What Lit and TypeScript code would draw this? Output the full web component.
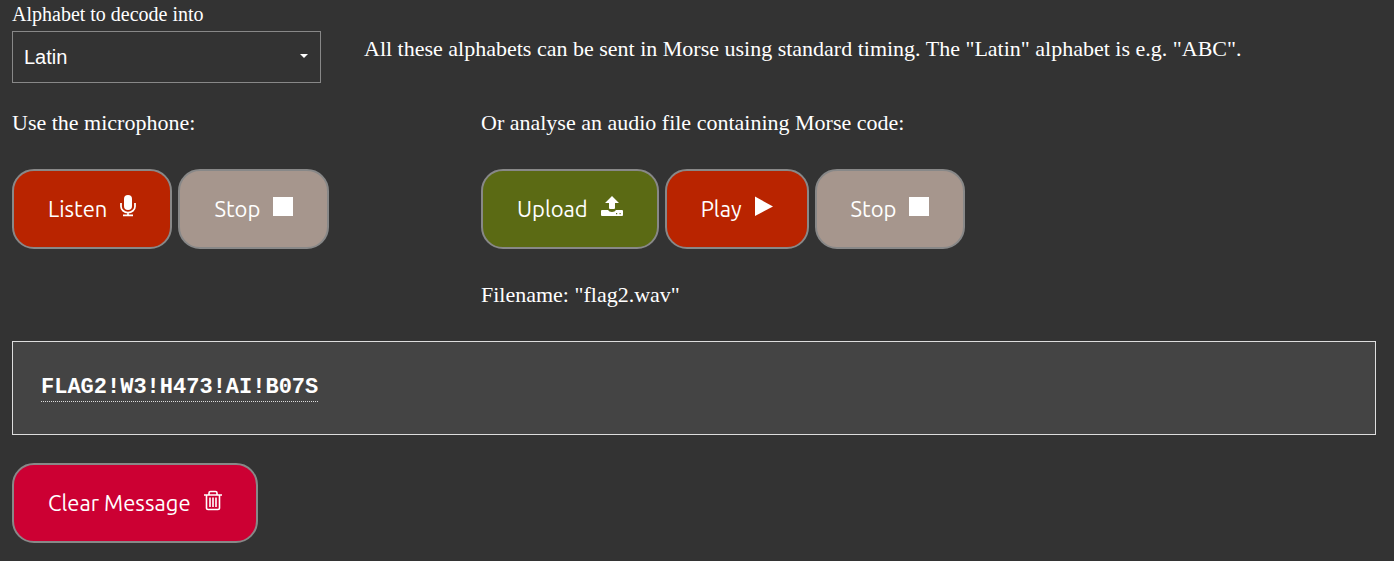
import { LitElement, html, css, svg } from "lit";
import { customElement, property, state } from "lit/decorators.js";

const icons = {
  mic: svg`<svg viewBox="0 0 16 22" width="16" height="22" aria-hidden="true">
    <rect x="4" y="0" width="8" height="15" rx="4" fill="currentColor" />
    <path d="M1 8v3.500a7 6 0 0 0 14 0V8M8 17.500V21M3 20.250h10" fill="none" stroke="currentColor" stroke-width="1.750" />
  </svg>`,
  stop: svg`<svg viewBox="0 0 20 22" width="20" height="22" aria-hidden="true">
    <rect x="0" y="2" width="20" height="19" fill="currentColor" />
  </svg>`,
  play: svg`<svg viewBox="0 0 18 22" width="18" height="22" aria-hidden="true">
    <path d="M0 1.500l18 10L0 21z" fill="currentColor" />
  </svg>`,
  upload: svg`<svg viewBox="0 0 22 22" width="22" height="22" aria-hidden="true">
    <path fill="currentColor" fill-rule="evenodd" d="M11 1l7 7h-4v5q0 1-1 1H9q-1 0-1-1V8H4zM1 15h6q1 2 4 2t4-2h6q1 0 1 1v4q0 1-1 1H1q-1 0-1-1v-4q0-1 1-1zM15 18v1.200h1.200V18zM18.500 18v1.200h1.200V18z" />
  </svg>`,
  trash: svg`<svg viewBox="0 0 18 22" width="18" height="22" aria-hidden="true">
    <path d="M0 6h18M5 5.500V4q0-1.500 1.500-1.500h5Q13 2.500 13 4v1.500M2.500 6v13q0 1.500 1.500 1.500h10q1.500 0 1.500-1.500V6M6 8.500V18M9 8.500V18M12 8.500V18" fill="none" stroke="currentColor" stroke-width="1.600" />
  </svg>`,
};

@customElement("action-button")
export class ActionButton extends LitElement {
  @property() icon: keyof typeof icons = "stop";
  @property() tone = "idle";

  static styles = css`
    :host {
      display: inline-flex;
    }
    .button {
      display: inline-flex;
      align-items: center;
      gap: 13px;
      height: 80px;
      padding: 0 34px 2px;
      border: 2px solid #888;
      border-radius: 22px;
      color: #fff;
      font: 400 22px Ubuntu, Lato, sans-serif;
      white-space: nowrap;
      cursor: pointer;
    }
    .button svg {
      display: block;
      margin-bottom: 4px;
    }
    .primary {
      background: #b92400;
    }
    .idle {
      background: #a6968d;
    }
    .upload {
      background: #5b6a14;
    }
    .danger {
      background: #cc0033;
    }
  `;

  render() {
    return html`<button class="button ${this.tone}" type="button"><slot></slot>${icons[this.icon]}</button>`;
  }
}

@customElement("app-root")
export class AppRoot extends LitElement {
  @state() private message = "FLAG2!W3!H473!AI!B07S";

  static styles = css`
    :host {
      display: block;
      box-sizing: border-box;
      min-height: 100vh;
      padding: 3px 18px 18px 12px;
      background: #333;
      color: #fff;
      font: 22px/28px "Liberation Serif", serif;
    }
    .alphabet {
      display: grid;
      grid-template-columns: 309px 1fr;
      column-gap: 43px;
      margin-bottom: 26px;
    }
    .label {
      display: block;
      margin-bottom: 5px;
      font-size: 20px;
      line-height: 23px;
    }
    .picker {
      position: relative;
    }
    .select {
      display: block;
      appearance: none;
      width: 100%;
      height: 52px;
      padding: 0 11px;
      border: 1px solid #888;
      border-radius: 0;
      background: #333;
      color: #fff;
      font: 20px "Liberation Sans", sans-serif;
    }
    .arrow {
      position: absolute;
      right: 13px;
      top: 23px;
      pointer-events: none;
    }
    .text {
      margin: 0;
    }
    .note {
      padding-top: 32px;
    }
    .sources {
      display: grid;
      grid-template-columns: 441fr 895fr;
      column-gap: 28px;
      margin-bottom: 32px;
    }
    .source {
      display: flex;
      flex-direction: column;
      gap: 32px;
    }
    .actions {
      display: flex;
      flex-wrap: wrap;
      gap: 6px;
    }
    .output {
      margin-bottom: 28px;
      padding: 32px 28px;
      border: 1px solid #ddd;
      background: #444;
      font: bold 22px/28px "Liberation Mono", monospace;
    }
    .decoded {
      padding-bottom: 1px;
      border-bottom: 1px dotted #ddd;
    }
  `;

  render() {
    return html`
      <div class="alphabet">
        <div>
          <label class="label" for="alphabet">Alphabet to decode into</label>
          <div class="picker">
            <select class="select" id="alphabet">
              <option>Latin</option>
            </select>
            <svg class="arrow" width="8" height="4" viewBox="0 0 8 4" aria-hidden="true"><path d="M0 0h8L4 4z" fill="#fff" /></svg>
          </div>
        </div>
        <p class="text note">
          All these alphabets can be sent in Morse using standard timing. The "Latin" alphabet is e.g. "ABC".
        </p>
      </div>
      <div class="sources">
        <div class="source">
          <p class="text">Use the microphone:</p>
          <div class="actions">
            <action-button tone="primary" icon="mic">Listen</action-button>
            <action-button tone="idle" icon="stop">Stop</action-button>
          </div>
        </div>
        <div class="source">
          <p class="text">Or analyse an audio file containing Morse code:</p>
          <div class="actions">
            <action-button tone="upload" icon="upload">Upload</action-button>
            <action-button tone="primary" icon="play">Play</action-button>
            <action-button tone="idle" icon="stop">Stop</action-button>
          </div>
          <p class="text">Filename: "flag2.wav"</p>
        </div>
      </div>
      <div class="output"><span class="decoded">${this.message}</span></div>
      <action-button tone="danger" icon="trash" @click=${() => (this.message = "")}>Clear Message</action-button>
    `;
  }
}
